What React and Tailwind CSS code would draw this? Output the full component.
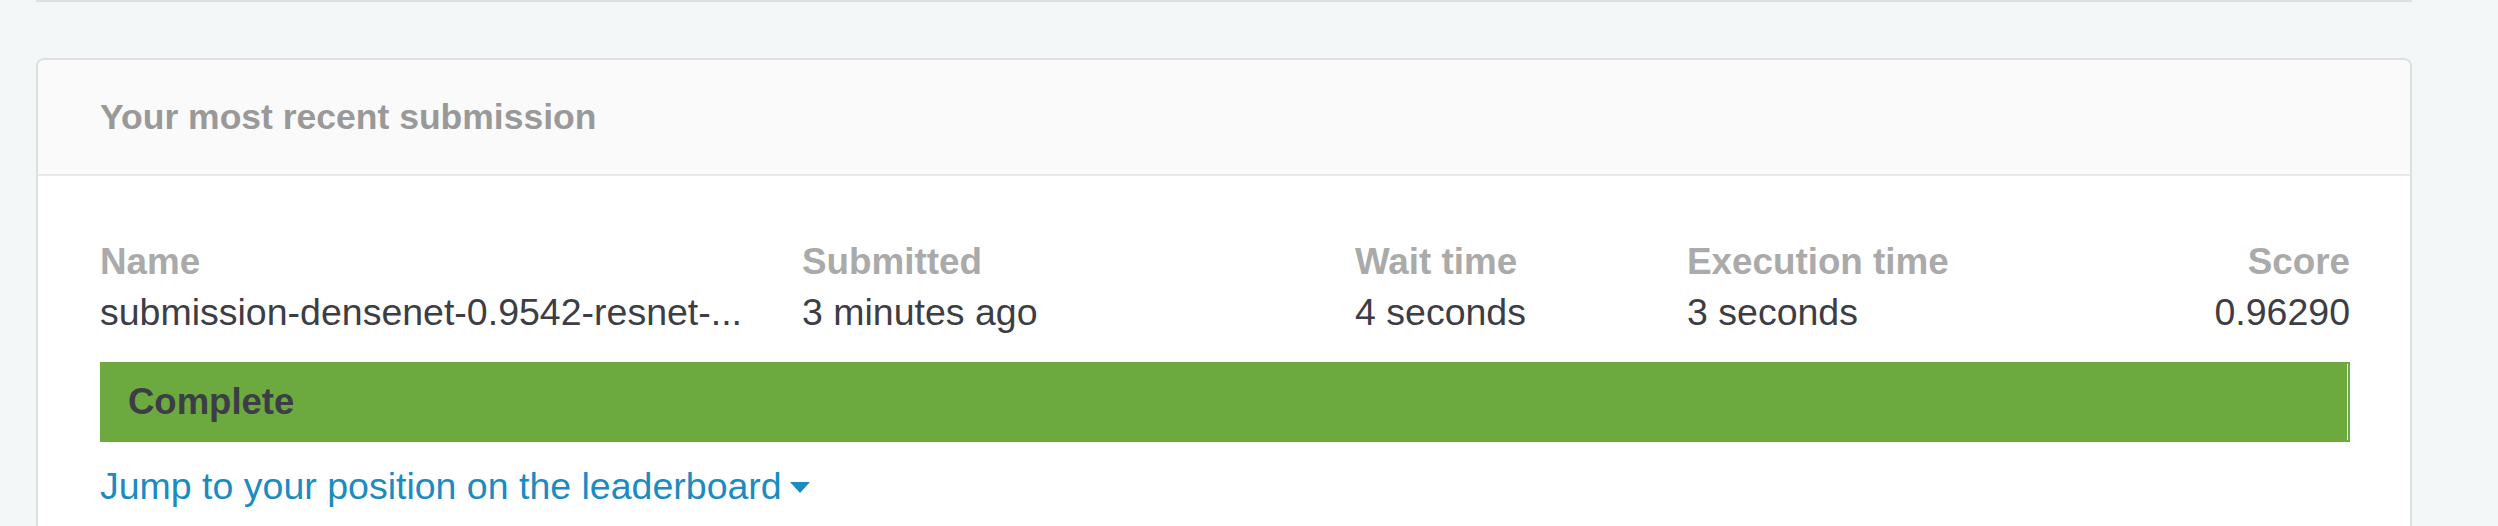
export default function App() {
  const cols = [
    { label: 'Name', value: 'submission-densenet-0.9542-resnet-...' },
    { label: 'Submitted', value: '3 minutes ago' },
    { label: 'Wait time', value: '4 seconds' },
    { label: 'Execution time', value: '3 seconds' },
    { label: 'Score', value: '0.96290', right: true },
  ];

  return (
    <div
      className="h-[526px] w-full overflow-hidden bg-[#f4f7f8]"
      style={{ fontFamily: '"Liberation Sans", Arial, sans-serif' }}
    >
      <div className="ml-[36px] h-[2px] w-[2376px] bg-[#dedfe0]" />

      <div className="mt-[56px] ml-[36px] w-[2376px] rounded-t-[8px] border-2 border-[#dedfe0] bg-white">
        <div className="flex h-[116px] items-center rounded-t-[6px] border-b-2 border-[#e8e8e8] bg-[#fafafa] pl-[62px]">
          <h2 className="text-[35.5px] leading-[44px] font-bold text-[#999999]">Your most recent submission</h2>
        </div>

        <div className="pt-[61px] pr-[60px] pb-[80px] pl-[62px]">
          <div className="grid grid-cols-[702px_553px_332px_1fr_auto] leading-[50px]">
            {cols.map((c) => (
              <div key={c.label} className={c.right ? 'text-right' : ''}>
                <div className="text-[36.8px] font-bold text-[#aaaaaa]">{c.label}</div>
                <div className="text-[37.5px] whitespace-nowrap text-[#3d3d45]">{c.value}</div>
              </div>
            ))}
          </div>

          <div className="mt-[25px] h-[80px] bg-[#6ca93f] p-[2px]">
            <div className="h-full border-r border-white pt-[16px] pl-[26px]">
              <span className="text-[36.5px] leading-[44px] font-bold text-[#3d3d45]">Complete</span>
            </div>
          </div>

          <div className="mt-[19px] flex items-center gap-[8px] text-[37.5px] leading-[50px] text-[#1b8bc0]">
            <span>Jump to your position on the leaderboard</span>
            <svg width="20" height="11" viewBox="0 0 20 11" className="mt-[2px]">
              <path d="M0 0 H20 L10 11 Z" fill="#1b8bc0" />
            </svg>
          </div>
        </div>
      </div>
    </div>
  );
}
